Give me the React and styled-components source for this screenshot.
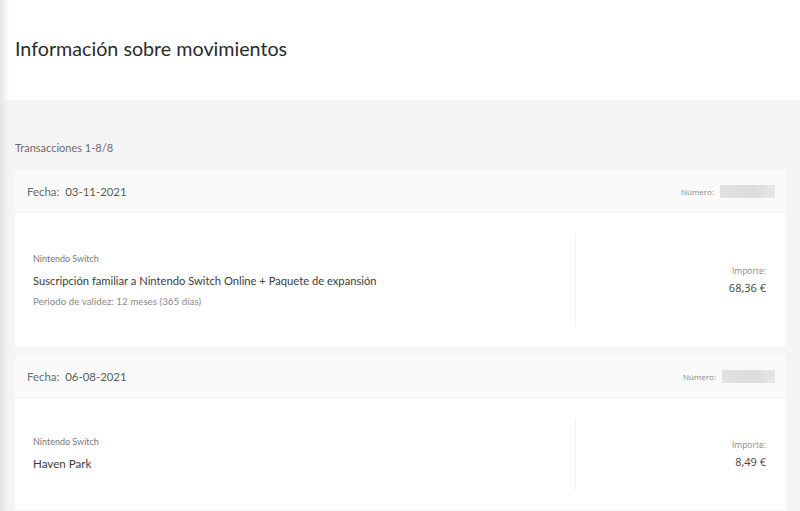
import React from "react";
import styled, { createGlobalStyle } from "styled-components";

const Global = createGlobalStyle`
  html, body { margin: 0; padding: 0; background: #f5f5f5; }
  body { font-family: Lato, "Noto Sans", sans-serif; color: #333; }
`;

const Page = styled.div`
  position: relative;
  width: 800px;
  min-height: 511px;
  height: 511px;
  overflow: hidden;
  background: #f5f5f5;
  &::before {
    content: "";
    position: absolute;
    left: 0; top: 0; bottom: 0;
    width: 9px;
    background: linear-gradient(to right, #e4e4e4, rgba(245,245,245,0));
    pointer-events: none;
    z-index: 2;
  }
`;

const Top = styled.header`
  background: #ffffff;
  height: 100px;
  padding: 0 15px;
  box-sizing: border-box;
  display: flex;
  align-items: flex-start;
`;

const Title = styled.h1`
  margin: 35px 0 0;
  font-size: 19.7px;
  font-weight: 400;
  color: #2b2b2b;
  line-height: 28px;
`;

const Content = styled.main`
  padding: 38px 14px 0 15px;
  display: flex;
  flex-direction: column;
`;

const Count = styled.div`
  font-size: 11px;
  color: #6b6b6b;
  line-height: 20px;
  margin-bottom: 12px;
`;

const List = styled.div`
  display: flex;
  flex-direction: column;
  gap: 8px;
`;

const Card = styled.section`
  display: flex;
  flex-direction: column;
  background: #fff;
`;

const CardHead = styled.div`
  height: 43px;
  background: #fafafa;
  display: flex;
  align-items: center;
  justify-content: space-between;
  padding: 0 11px 0 12px;
  border-bottom: 1px solid #f2f2f2;
  box-sizing: border-box;
`;

const DateText = styled.div`
  font-size: 11.4px;
  color: #5a5a5a;
  span { margin-right: 6px; color: #6a6a6a; }
`;

const Number = styled.div`
  display: flex;
  align-items: center;
  gap: 6px;
  font-family: "Open Sans", sans-serif;
  font-size: 8px;
  color: #888;
`;

const Blur = styled.div`
  width: ${(p) => p.w}px;
  height: 13px;
  background: linear-gradient(to right, #e2e2e2, #dcdcdc 60%, #e6e6e6);
  filter: blur(0.6px);
`;

const Body = styled.div`
  display: flex;
  padding: 20px 0;
`;

const Left = styled.div`
  flex: 1;
  padding: 0 18px;
  display: flex;
  flex-direction: column;
  justify-content: center;
  min-height: ${(p) => p.min}px;
`;

const Platform = styled.div`
  font-size: 9px;
  color: #777;
  line-height: 12px;
`;

const ItemName = styled.div`
  font-size: ${(p) => (p.short ? 11.6 : 11.2)}px;
  color: #3c3c3c;
  line-height: 16px;
  margin-top: 8px;
`;

const Validity = styled.div`
  font-size: 9.8px;
  color: #888;
  line-height: 12px;
  margin-top: 6px;
`;

const Right = styled.div`
  width: 211px;
  border-left: 1px solid #f0f0f0;
  box-sizing: border-box;
  padding-right: 20px;
  display: flex;
  flex-direction: column;
  align-items: flex-end;
  justify-content: center;
`;

const AmountLabel = styled.div`
  font-family: "Open Sans", sans-serif;
  font-size: 8.5px;
  color: #8a8a8a;
  line-height: 12px;
`;

const Amount = styled.div`
  font-family: "Open Sans", sans-serif;
  font-size: 11px;
  color: #444;
  line-height: 16px;
  margin-top: 3px;
`;

const items = [
  {
    date: "03-11-2021",
    blur: 55,
    name: "Suscripción familiar a Nintendo Switch Online + Paquete de expansión",
    validity: "Periodo de validez: 12 meses (365 días)",
    amount: "68,36 €",
    min: 94,
  },
  {
    date: "06-08-2021",
    blur: 53,
    name: "Haven Park",
    amount: "8,49 €",
    min: 72,
    short: true,
  },
];

export default function App() {
  return (
    <>
      <Global />
      <Page>
        <Top>
          <Title>Información sobre movimientos</Title>
        </Top>
        <Content>
          <Count>Transacciones 1-8/8</Count>
          <List>
            {items.map((it) => (
              <Card key={it.date}>
                <CardHead>
                  <DateText>
                    <span>Fecha:</span>
                    {it.date}
                  </DateText>
                  <Number>
                    Número:
                    <Blur w={it.blur} />
                  </Number>
                </CardHead>
                <Body>
                  <Left min={it.min}>
                    <Platform>Nintendo Switch</Platform>
                    <ItemName short={it.short}>{it.name}</ItemName>
                    {it.validity && <Validity>{it.validity}</Validity>}
                  </Left>
                  <Right>
                    <AmountLabel>Importe:</AmountLabel>
                    <Amount>{it.amount}</Amount>
                  </Right>
                </Body>
              </Card>
            ))}
          </List>
        </Content>
      </Page>
    </>
  );
}
